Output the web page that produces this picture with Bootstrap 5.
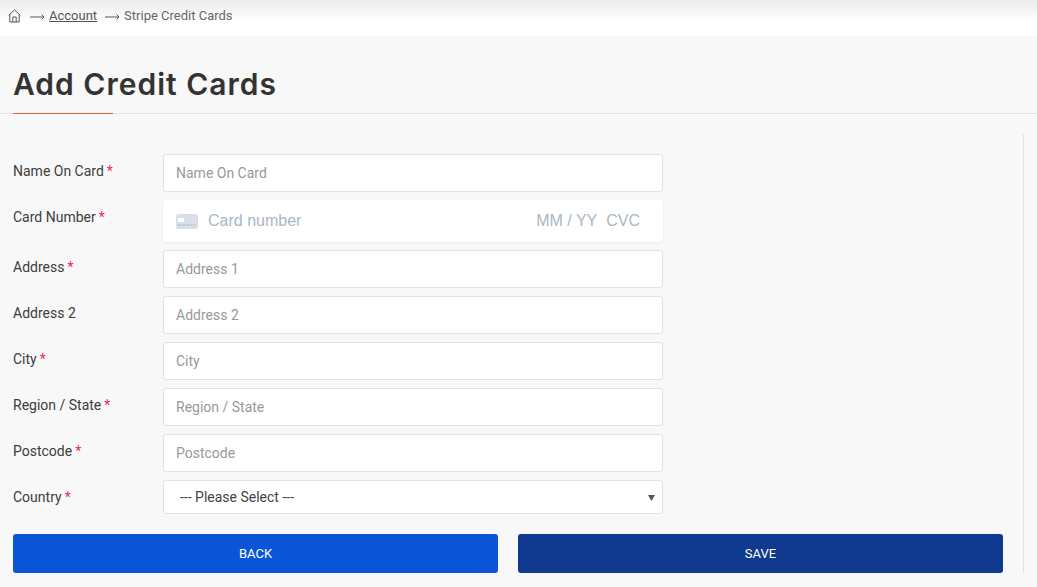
<!DOCTYPE html>
<html lang="en">
<head>
    <meta charset="UTF-8">
    <title>Add Credit Cards</title>
    <link href="https://cdn.jsdelivr.net/npm/bootstrap@5.3.3/dist/css/bootstrap.min.css" rel="stylesheet">
    <style>
        html, body { height: 100%; overflow: hidden; }
        body { background: #f8f8f8; font-family: Roboto, "Liberation Sans", sans-serif; font-size: 14px; color: #333; }
        .crumb-bar { height: 36px; padding: 0 0 4px 8px; background: linear-gradient(#ececec, #fff 60%); color: #666; font-size: 13px; }
        .crumb-bar a { color: #555; }
        .crumb-arrow { margin: 1px 4px 0 8px; width: 15px; height: 8px; }
        .crumb-home { margin-right: 1px; }
        .page-title { height: 78px; border-bottom: 1px solid #e2e2e2; position: relative; padding: 29px 13px 0; }
        .page-title::after { content: ""; position: absolute; left: 13px; bottom: -1px; width: 100px; height: 1px; background: #e0623c; }
        .page-title h1 { font-family: Inter, Lato, sans-serif; font-weight: 600; font-size: 30px; letter-spacing: 1px; line-height: 38px; color: #333; margin: 0; }
        .form-wrap { width: 1024px; margin-top: 20px; padding: 20px 20px 0 13px; border-right: 1px solid #e2e2e2; }
        .field-row { margin-bottom: 8px; }
        .field-label { width: 150px; flex: none; padding-top: 9px; line-height: 17px; color: #3d3d3d; }
        .req { color: #ee2a52; margin-left: 3px; }
        .field-box { width: 500px; height: 38px; border: 1px solid #e2e2e2; border-radius: 3px; padding: 0 12px; font-size: 14px; color: #333; box-shadow: none; }
        .field-box::placeholder { color: #999; opacity: 1; }
        .stripe-box { width: 500px; height: 42px; background: #fff; border-radius: 4px; box-shadow: 0 1px 3px #e6ebf1; padding: 0 23px 0 13px; font-family: "Liberation Sans", sans-serif; font-size: 16px; color: #aab7c4; }
        .stripe-box svg { margin-right: 10px; }
        .stripe-cvc { margin-left: 9px; }
        .select-box { width: 500px; height: 34px; border: 1px solid #e2e2e2; border-radius: 3px; padding: 0 16px; font-size: 14px; color: #444; background-size: 7px 7px; background-position: right 7px center; background-image: url("data:image/svg+xml,%3Csvg xmlns='http://www.w3.org/2000/svg' viewBox='0 0 7 7'%3E%3Cpath d='M0 1h7L3.5 7z' fill='%23555'/%3E%3C/svg%3E"); }
        .btn-row { margin-top: 20px; gap: 20px; }
        .act-btn { height: 39px; border: 0; border-radius: 3px; font-size: 13px; font-weight: 400; color: #fff; text-transform: uppercase; }
        .act-back { background: #0b55d9; }
        .act-save { background: #103a8f; }
    </style>
</head>
<body>
<div class="crumb-bar d-flex align-items-center">
    <svg class="crumb-home" width="13" height="14" viewBox="0 0 13 14" fill="none" stroke="#555" stroke-width="1">
        <path d="M.8 6.2 6.5 1 12.2 6.2M1.8 5.4V13H11.2V5.4M4.8 13V8H8.2V13"/>
    </svg>
    <svg class="crumb-arrow" viewBox="0 0 15 8" fill="none" stroke="#555"><path d="M0 4H14M11.5 1.5 14 4 11.5 6.5"/></svg>
    <a href="#">Account</a>
    <svg class="crumb-arrow" viewBox="0 0 15 8" fill="none" stroke="#555"><path d="M0 4H14M11.5 1.5 14 4 11.5 6.5"/></svg>
    <span>Stripe Credit Cards</span>
</div>

<div class="page-title">
    <h1>Add Credit Cards</h1>
</div>

<form class="form-wrap">
    <div class="d-flex field-row">
        <label class="field-label">Name On Card<span class="req">*</span></label>
        <input type="text" class="form-control field-box" placeholder="Name On Card">
    </div>
    <div class="d-flex field-row">
        <label class="field-label">Card Number<span class="req">*</span></label>
        <div class="stripe-box d-flex align-items-center">
            <svg width="22" height="15" viewBox="0 0 22 15">
                <rect width="22" height="15" rx="2" fill="#d9dfe8"/>
                <rect x="2" y="4" width="6" height="4" fill="#fff"/>
                <path d="M2 11h18" stroke="#aab7c4" stroke-dasharray="3 1"/>
            </svg>
            <span>Card number</span>
            <span class="ms-auto">MM / YY</span>
            <span class="stripe-cvc">CVC</span>
        </div>
    </div>
    <div class="d-flex field-row">
        <label class="field-label">Address<span class="req">*</span></label>
        <input type="text" class="form-control field-box" placeholder="Address 1">
    </div>
    <div class="d-flex field-row">
        <label class="field-label">Address 2</label>
        <input type="text" class="form-control field-box" placeholder="Address 2">
    </div>
    <div class="d-flex field-row">
        <label class="field-label">City<span class="req">*</span></label>
        <input type="text" class="form-control field-box" placeholder="City">
    </div>
    <div class="d-flex field-row">
        <label class="field-label">Region / State<span class="req">*</span></label>
        <input type="text" class="form-control field-box" placeholder="Region / State">
    </div>
    <div class="d-flex field-row">
        <label class="field-label">Postcode<span class="req">*</span></label>
        <input type="text" class="form-control field-box" placeholder="Postcode">
    </div>
    <div class="d-flex field-row">
        <label class="field-label">Country<span class="req">*</span></label>
        <select class="form-select select-box">
            <option>--- Please Select ---</option>
        </select>
    </div>
    <div class="d-flex btn-row">
        <button type="button" class="btn act-btn act-back flex-fill w-50">Back</button>
        <button type="button" class="btn act-btn act-save flex-fill w-50">Save</button>
    </div>
</form>

<script src="https://cdn.jsdelivr.net/npm/bootstrap@5.3.3/dist/js/bootstrap.bundle.min.js"></script>
</body>
</html>
